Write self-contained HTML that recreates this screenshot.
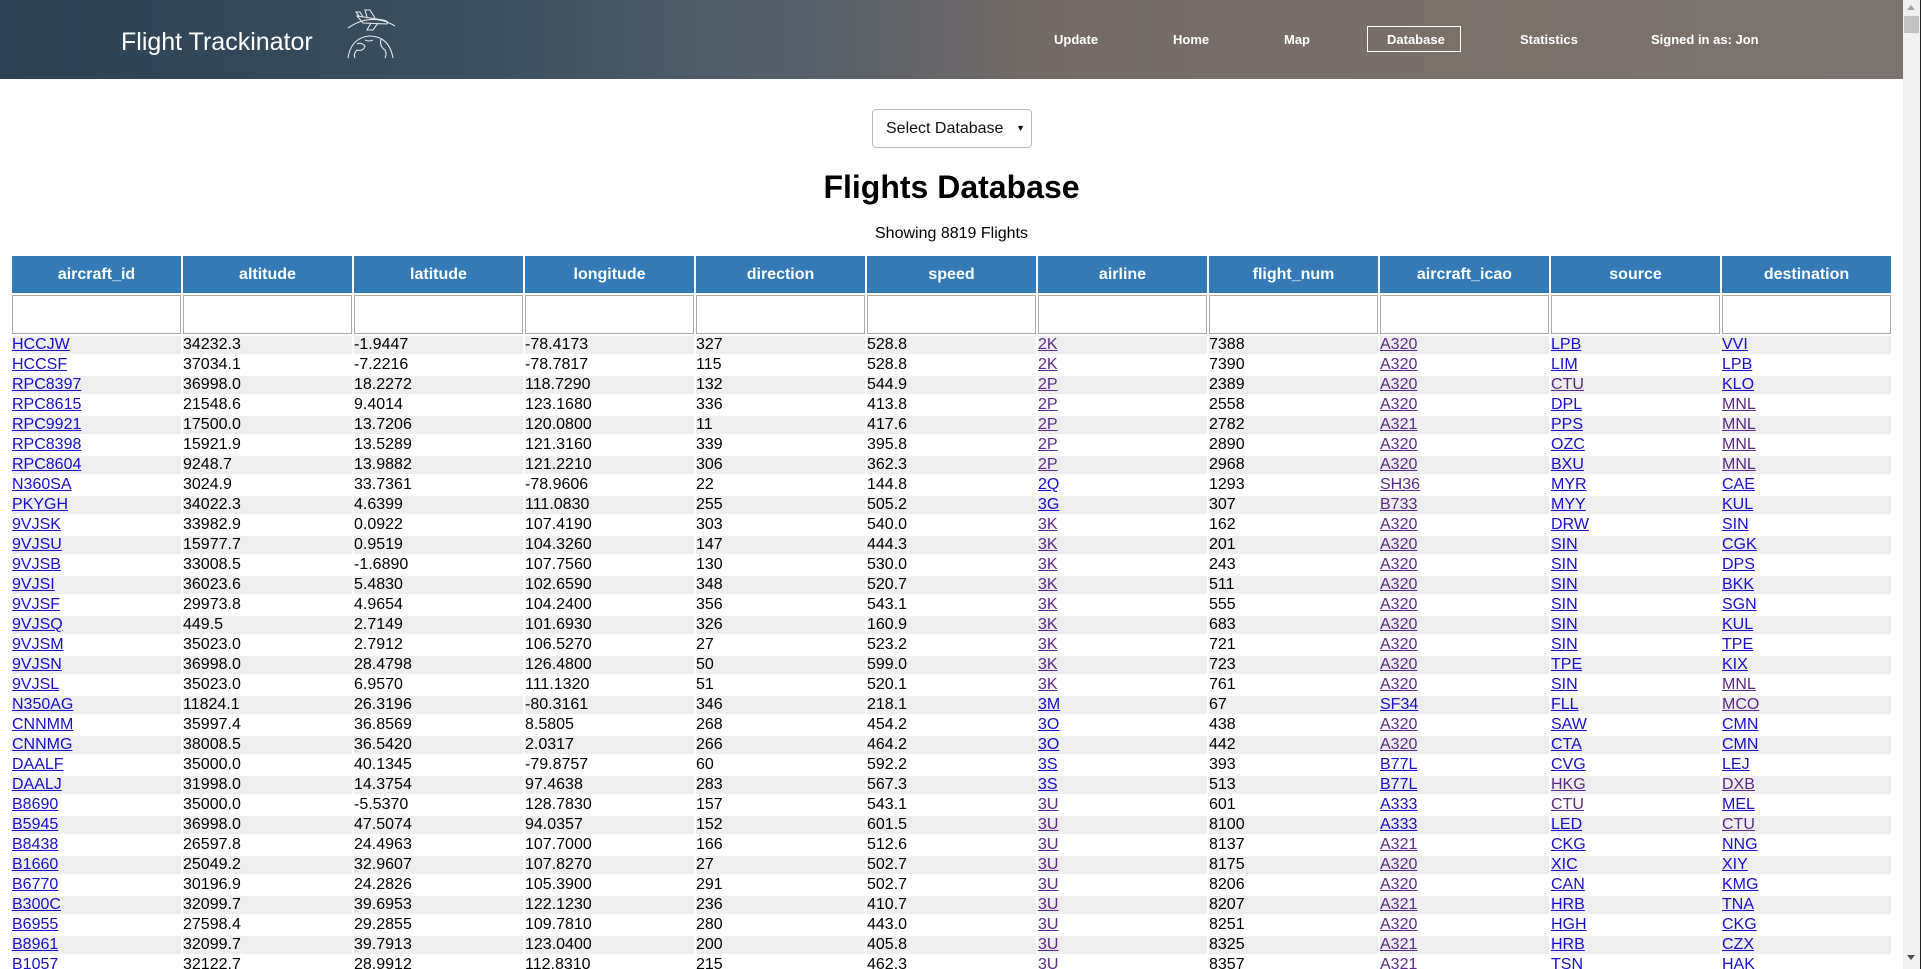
<!DOCTYPE html>
<html><head><meta charset="utf-8">
<style>
html,body{margin:0;padding:0;overflow:hidden;width:1921px;height:969px;background:#fff;font-family:"Liberation Sans",Arial,sans-serif}
#page{position:absolute;left:0;top:0;width:1903px;height:969px;overflow:hidden}
#hdr{position:absolute;left:0;top:0;width:1903px;height:79px;background:linear-gradient(90deg,#2c4254 0%,#3a4f60 25%,#56606a 42%,#736a66 55%,#7b716b 80%,#7a726e 100%)}
.brand{position:absolute;left:121px;top:28px;color:#fff;font-size:25px}
.nav{position:absolute;top:32px;color:#fff;font-size:13px;font-weight:bold}
.dbbox{position:absolute;left:1367px;top:26px;width:92px;height:24px;border:1.5px solid #fff}
#scroll{position:absolute;left:1903px;top:0;width:17px;height:969px;background:#f0f0f0}
#scroll .th{position:absolute;left:1px;top:16px;width:15px;height:17px;background:#c1c1c1}
#scroll .up{position:absolute;left:4px;top:5px;width:0;height:0;border-left:4px solid transparent;border-right:4px solid transparent;border-bottom:5px solid #a3a3a3}
#scroll .dn{position:absolute;left:4px;top:955px;width:0;height:0;border-left:4px solid transparent;border-right:4px solid transparent;border-top:5px solid #505050}
#edge{position:absolute;left:1920px;top:0;width:1px;height:969px;background:#222}
.sel{position:absolute;left:872px;top:109px;width:160px;height:39px;border:1px solid #bbb;border-radius:4px;box-sizing:border-box;font-size:16px;color:#111}
.sel span{position:absolute;left:13px;top:10px}
.sel i{position:absolute;right:6px;top:13px;font-style:normal;font-size:9px}
h1{position:absolute;left:0;width:1903px;top:169px;margin:0;text-align:center;font-size:32px;font-weight:bold}
.show{position:absolute;left:0;width:1903px;top:225px;text-align:center;font-size:16px}
table{position:absolute;left:10px;top:254px;border-collapse:separate;border-spacing:2px;table-layout:fixed;width:1883px}
td,th{padding:0;font-size:16px;height:18px;line-height:18px;white-space:nowrap;overflow:hidden;text-align:left}
th{background:#337ab7;color:#fff;height:37px;text-align:center;font-weight:bold}
tr.f td{height:39px;border:1px solid #aaa;box-sizing:border-box;padding:0}
tbody tr:nth-child(odd) td{background:#eee}
a{color:#1a0dcc;text-decoration:underline}
a.v{color:#5b2a86}
</style></head><body>
<div id="page">
<div id="hdr">
<div class="brand">Flight Trackinator</div>
<svg style="position:absolute;left:343px;top:6px" width="56" height="54" viewBox="0 0 56 54" fill="none" stroke="#dfe6ec" stroke-width="1.1">
<path d="M5 22 Q28 6 52 20"/>
<path d="M14 10 L40 14 Q46 15 44 18 L20 17 Z"/>
<path d="M24 11 L22 4 L27 4 L32 12"/>
<path d="M28 17 L24 24 L30 24 L35 17"/>
<path d="M16 10 L13 6 L17 6 L20 11"/>
<path d="M5 52 Q8 32 26 30 Q46 30 50 52"/>
<path d="M14 38 Q18 36 22 40 Q20 46 14 44 Q10 48 12 52"/>
<path d="M38 33 Q36 40 42 44 Q44 48 42 52"/>
<path d="M22 34 Q26 36 30 34"/>
</svg>
<div class="nav" style="left:1054px">Update</div>
<div class="nav" style="left:1173px">Home</div>
<div class="nav" style="left:1284px">Map</div>
<div class="dbbox"></div>
<div class="nav" style="left:1387px">Database</div>
<div class="nav" style="left:1520px">Statistics</div>
<div class="nav" style="left:1651px">Signed in as: Jon</div>
</div>
<div class="sel"><span>Select Database</span><i>▼</i></div>
<h1>Flights Database</h1>
<div class="show">Showing 8819 Flights</div>
<table>
<thead>
<tr><th>aircraft_id</th><th>altitude</th><th>latitude</th><th>longitude</th><th>direction</th><th>speed</th><th>airline</th><th>flight_num</th><th>aircraft_icao</th><th>source</th><th>destination</th></tr>
<tr class="f"><td></td><td></td><td></td><td></td><td></td><td></td><td></td><td></td><td></td><td></td><td></td></tr>
</thead>
<tbody>
<tr><td><a>HCCJW</a></td><td>34232.3</td><td>-1.9447</td><td>-78.4173</td><td>327</td><td>528.8</td><td><a class="v">2K</a></td><td>7388</td><td><a class="v">A320</a></td><td><a>LPB</a></td><td><a>VVI</a></td></tr>
<tr><td><a>HCCSF</a></td><td>37034.1</td><td>-7.2216</td><td>-78.7817</td><td>115</td><td>528.8</td><td><a class="v">2K</a></td><td>7390</td><td><a class="v">A320</a></td><td><a>LIM</a></td><td><a>LPB</a></td></tr>
<tr><td><a>RPC8397</a></td><td>36998.0</td><td>18.2272</td><td>118.7290</td><td>132</td><td>544.9</td><td><a class="v">2P</a></td><td>2389</td><td><a class="v">A320</a></td><td><a class="v">CTU</a></td><td><a>KLO</a></td></tr>
<tr><td><a>RPC8615</a></td><td>21548.6</td><td>9.4014</td><td>123.1680</td><td>336</td><td>413.8</td><td><a class="v">2P</a></td><td>2558</td><td><a class="v">A320</a></td><td><a>DPL</a></td><td><a class="v">MNL</a></td></tr>
<tr><td><a>RPC9921</a></td><td>17500.0</td><td>13.7206</td><td>120.0800</td><td>11</td><td>417.6</td><td><a class="v">2P</a></td><td>2782</td><td><a class="v">A321</a></td><td><a>PPS</a></td><td><a class="v">MNL</a></td></tr>
<tr><td><a>RPC8398</a></td><td>15921.9</td><td>13.5289</td><td>121.3160</td><td>339</td><td>395.8</td><td><a class="v">2P</a></td><td>2890</td><td><a class="v">A320</a></td><td><a>OZC</a></td><td><a class="v">MNL</a></td></tr>
<tr><td><a>RPC8604</a></td><td>9248.7</td><td>13.9882</td><td>121.2210</td><td>306</td><td>362.3</td><td><a class="v">2P</a></td><td>2968</td><td><a class="v">A320</a></td><td><a>BXU</a></td><td><a class="v">MNL</a></td></tr>
<tr><td><a>N360SA</a></td><td>3024.9</td><td>33.7361</td><td>-78.9606</td><td>22</td><td>144.8</td><td><a>2Q</a></td><td>1293</td><td><a class="v">SH36</a></td><td><a>MYR</a></td><td><a>CAE</a></td></tr>
<tr><td><a>PKYGH</a></td><td>34022.3</td><td>4.6399</td><td>111.0830</td><td>255</td><td>505.2</td><td><a>3G</a></td><td>307</td><td><a class="v">B733</a></td><td><a>MYY</a></td><td><a>KUL</a></td></tr>
<tr><td><a>9VJSK</a></td><td>33982.9</td><td>0.0922</td><td>107.4190</td><td>303</td><td>540.0</td><td><a class="v">3K</a></td><td>162</td><td><a class="v">A320</a></td><td><a>DRW</a></td><td><a>SIN</a></td></tr>
<tr><td><a>9VJSU</a></td><td>15977.7</td><td>0.9519</td><td>104.3260</td><td>147</td><td>444.3</td><td><a class="v">3K</a></td><td>201</td><td><a class="v">A320</a></td><td><a>SIN</a></td><td><a>CGK</a></td></tr>
<tr><td><a>9VJSB</a></td><td>33008.5</td><td>-1.6890</td><td>107.7560</td><td>130</td><td>530.0</td><td><a class="v">3K</a></td><td>243</td><td><a class="v">A320</a></td><td><a>SIN</a></td><td><a>DPS</a></td></tr>
<tr><td><a>9VJSI</a></td><td>36023.6</td><td>5.4830</td><td>102.6590</td><td>348</td><td>520.7</td><td><a class="v">3K</a></td><td>511</td><td><a class="v">A320</a></td><td><a>SIN</a></td><td><a>BKK</a></td></tr>
<tr><td><a>9VJSF</a></td><td>29973.8</td><td>4.9654</td><td>104.2400</td><td>356</td><td>543.1</td><td><a class="v">3K</a></td><td>555</td><td><a class="v">A320</a></td><td><a>SIN</a></td><td><a>SGN</a></td></tr>
<tr><td><a>9VJSQ</a></td><td>449.5</td><td>2.7149</td><td>101.6930</td><td>326</td><td>160.9</td><td><a class="v">3K</a></td><td>683</td><td><a class="v">A320</a></td><td><a>SIN</a></td><td><a>KUL</a></td></tr>
<tr><td><a>9VJSM</a></td><td>35023.0</td><td>2.7912</td><td>106.5270</td><td>27</td><td>523.2</td><td><a class="v">3K</a></td><td>721</td><td><a class="v">A320</a></td><td><a>SIN</a></td><td><a>TPE</a></td></tr>
<tr><td><a>9VJSN</a></td><td>36998.0</td><td>28.4798</td><td>126.4800</td><td>50</td><td>599.0</td><td><a class="v">3K</a></td><td>723</td><td><a class="v">A320</a></td><td><a>TPE</a></td><td><a>KIX</a></td></tr>
<tr><td><a>9VJSL</a></td><td>35023.0</td><td>6.9570</td><td>111.1320</td><td>51</td><td>520.1</td><td><a class="v">3K</a></td><td>761</td><td><a class="v">A320</a></td><td><a>SIN</a></td><td><a class="v">MNL</a></td></tr>
<tr><td><a>N350AG</a></td><td>11824.1</td><td>26.3196</td><td>-80.3161</td><td>346</td><td>218.1</td><td><a>3M</a></td><td>67</td><td><a>SF34</a></td><td><a>FLL</a></td><td><a class="v">MCO</a></td></tr>
<tr><td><a>CNNMM</a></td><td>35997.4</td><td>36.8569</td><td>8.5805</td><td>268</td><td>454.2</td><td><a>3O</a></td><td>438</td><td><a class="v">A320</a></td><td><a>SAW</a></td><td><a>CMN</a></td></tr>
<tr><td><a>CNNMG</a></td><td>38008.5</td><td>36.5420</td><td>2.0317</td><td>266</td><td>464.2</td><td><a>3O</a></td><td>442</td><td><a class="v">A320</a></td><td><a>CTA</a></td><td><a>CMN</a></td></tr>
<tr><td><a>DAALF</a></td><td>35000.0</td><td>40.1345</td><td>-79.8757</td><td>60</td><td>592.2</td><td><a>3S</a></td><td>393</td><td><a>B77L</a></td><td><a>CVG</a></td><td><a>LEJ</a></td></tr>
<tr><td><a>DAALJ</a></td><td>31998.0</td><td>14.3754</td><td>97.4638</td><td>283</td><td>567.3</td><td><a>3S</a></td><td>513</td><td><a>B77L</a></td><td><a class="v">HKG</a></td><td><a class="v">DXB</a></td></tr>
<tr><td><a>B8690</a></td><td>35000.0</td><td>-5.5370</td><td>128.7830</td><td>157</td><td>543.1</td><td><a class="v">3U</a></td><td>601</td><td><a>A333</a></td><td><a class="v">CTU</a></td><td><a>MEL</a></td></tr>
<tr><td><a>B5945</a></td><td>36998.0</td><td>47.5074</td><td>94.0357</td><td>152</td><td>601.5</td><td><a class="v">3U</a></td><td>8100</td><td><a>A333</a></td><td><a>LED</a></td><td><a class="v">CTU</a></td></tr>
<tr><td><a>B8438</a></td><td>26597.8</td><td>24.4963</td><td>107.7000</td><td>166</td><td>512.6</td><td><a class="v">3U</a></td><td>8137</td><td><a class="v">A321</a></td><td><a>CKG</a></td><td><a>NNG</a></td></tr>
<tr><td><a>B1660</a></td><td>25049.2</td><td>32.9607</td><td>107.8270</td><td>27</td><td>502.7</td><td><a class="v">3U</a></td><td>8175</td><td><a class="v">A320</a></td><td><a>XIC</a></td><td><a>XIY</a></td></tr>
<tr><td><a>B6770</a></td><td>30196.9</td><td>24.2826</td><td>105.3900</td><td>291</td><td>502.7</td><td><a class="v">3U</a></td><td>8206</td><td><a class="v">A320</a></td><td><a>CAN</a></td><td><a>KMG</a></td></tr>
<tr><td><a>B300C</a></td><td>32099.7</td><td>39.6953</td><td>122.1230</td><td>236</td><td>410.7</td><td><a class="v">3U</a></td><td>8207</td><td><a class="v">A321</a></td><td><a>HRB</a></td><td><a>TNA</a></td></tr>
<tr><td><a>B6955</a></td><td>27598.4</td><td>29.2855</td><td>109.7810</td><td>280</td><td>443.0</td><td><a class="v">3U</a></td><td>8251</td><td><a class="v">A320</a></td><td><a>HGH</a></td><td><a>CKG</a></td></tr>
<tr><td><a>B8961</a></td><td>32099.7</td><td>39.7913</td><td>123.0400</td><td>200</td><td>405.8</td><td><a class="v">3U</a></td><td>8325</td><td><a class="v">A321</a></td><td><a>HRB</a></td><td><a>CZX</a></td></tr>
<tr><td><a>B1057</a></td><td>32122.7</td><td>28.9912</td><td>112.8310</td><td>215</td><td>462.3</td><td><a class="v">3U</a></td><td>8357</td><td><a class="v">A321</a></td><td><a>TSN</a></td><td><a>HAK</a></td></tr>
</tbody>
</table>
</div>
<div id="scroll"><div class="up"></div><div class="th"></div><div class="dn"></div></div>
<div id="edge"></div>
</body></html>
